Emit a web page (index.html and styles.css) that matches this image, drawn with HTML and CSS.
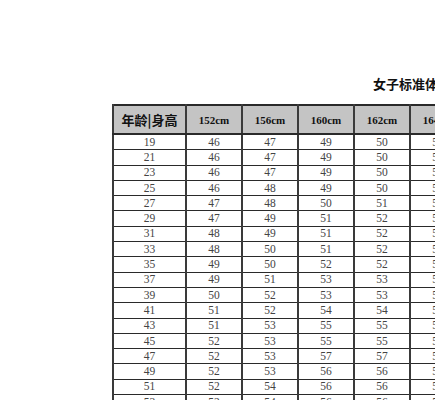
FILE: index.html
```html
<!DOCTYPE html>
<html lang="zh">
<head>
<meta charset="utf-8">
<title>女子标准体重表</title>
<link rel="stylesheet" href="styles.css">
</head>
<body>
<div class="page">
  <h1 class="title">女子标准体重表</h1>
  <table class="chart">
    <colgroup>
      <col class="c-age"><col class="c-h"><col class="c-h"><col class="c-h"><col class="c-h"><col class="c-h">
    </colgroup>
    <thead>
      <tr><th class="corner">年龄|身高</th><th>152cm</th><th>156cm</th><th>160cm</th><th>162cm</th><th>164cm</th></tr>
    </thead>
    <tbody>
      <tr><td>19</td><td>46</td><td>47</td><td>49</td><td>50</td><td>51</td></tr>
      <tr><td>21</td><td>46</td><td>47</td><td>49</td><td>50</td><td>51</td></tr>
      <tr><td>23</td><td>46</td><td>47</td><td>49</td><td>50</td><td>51</td></tr>
      <tr><td>25</td><td>46</td><td>48</td><td>49</td><td>50</td><td>51</td></tr>
      <tr><td>27</td><td>47</td><td>48</td><td>50</td><td>51</td><td>52</td></tr>
      <tr><td>29</td><td>47</td><td>49</td><td>51</td><td>52</td><td>53</td></tr>
      <tr><td>31</td><td>48</td><td>49</td><td>51</td><td>52</td><td>53</td></tr>
      <tr><td>33</td><td>48</td><td>50</td><td>51</td><td>52</td><td>53</td></tr>
      <tr><td>35</td><td>49</td><td>50</td><td>52</td><td>52</td><td>53</td></tr>
      <tr><td>37</td><td>49</td><td>51</td><td>53</td><td>53</td><td>54</td></tr>
      <tr><td>39</td><td>50</td><td>52</td><td>53</td><td>53</td><td>54</td></tr>
      <tr><td>41</td><td>51</td><td>52</td><td>54</td><td>54</td><td>55</td></tr>
      <tr><td>43</td><td>51</td><td>53</td><td>55</td><td>55</td><td>56</td></tr>
      <tr><td>45</td><td>52</td><td>53</td><td>55</td><td>55</td><td>56</td></tr>
      <tr><td>47</td><td>52</td><td>53</td><td>57</td><td>57</td><td>57</td></tr>
      <tr><td>49</td><td>52</td><td>53</td><td>56</td><td>56</td><td>57</td></tr>
      <tr><td>51</td><td>52</td><td>54</td><td>56</td><td>56</td><td>57</td></tr>
      <tr><td>53</td><td>52</td><td>54</td><td>56</td><td>56</td><td>57</td></tr>
    </tbody>
  </table>
</div>
</body>
</html>
```
FILE: styles.css
```css
html, body {
  margin: 0;
  padding: 0;
  background: #ffffff;
  overflow: hidden;
}
.page {
  width: 700px;
  padding-top: 77px;
}
.title {
  margin: 0 0 0 373px;
  height: 14px;
  font-family: "Noto Sans CJK SC", "Noto Sans CJK JP", sans-serif;
  font-size: 13px;
  line-height: 14px;
  font-weight: 700;
  color: #111;
  white-space: nowrap;
}
.chart {
  margin: 13px 0 0 112px;
  border-collapse: collapse;
  table-layout: fixed;
  width: 353px;
  border: 2px solid #2a2a2a;
}
.c-age { width: 73px; }
.c-h { width: 56px; }
.chart th {
  height: 27px;
  padding: 0;
  background: #c4c4c4;
  border-left: 2px solid #3a3a3a;
  border-right: 2px solid #3a3a3a;
  border-bottom: 2px solid #2a2a2a;
  font-family: "Liberation Serif", serif;
  font-size: 11px;
  font-weight: 700;
  color: #111;
  text-align: center;
  vertical-align: middle;
}
.chart th.corner {
  font-family: "Noto Sans CJK SC", "Noto Sans CJK JP", sans-serif;
  font-size: 13px;
  letter-spacing: 0;
}
.chart td {
  height: 14.3px;
  padding: 0;
  border-left: 2px solid #3a3a3a;
  border-right: 2px solid #3a3a3a;
  border-top: 1px solid #2a2a2a;
  border-bottom: 1px solid #2a2a2a;
  font-family: "Liberation Serif", serif;
  font-size: 11.5px;
  line-height: 13px;
  color: #444;
  text-align: center;
  vertical-align: middle;
}
```
